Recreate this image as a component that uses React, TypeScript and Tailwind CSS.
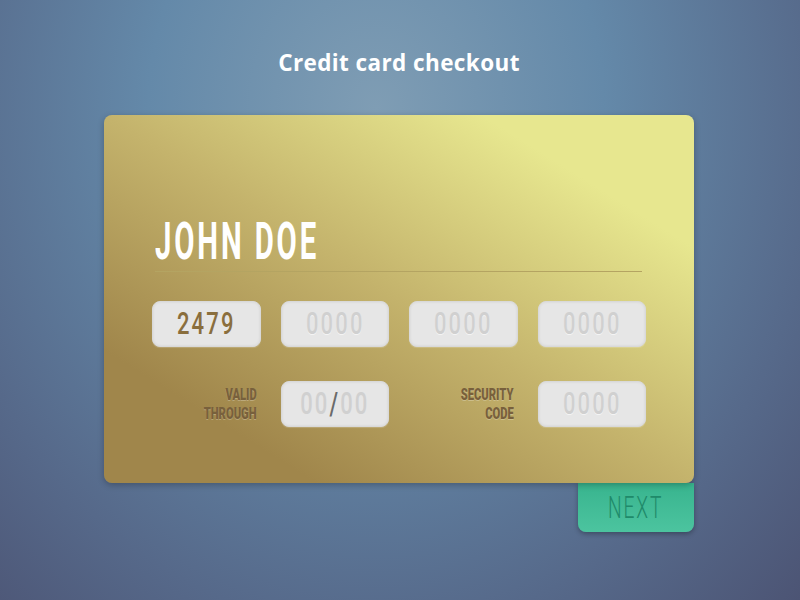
const NUMBER_GROUPS = ["2479", "", "", ""];

// narrow display type: Roboto squeezed horizontally
const NARROW = "font-['Roboto'] inline-block scale-x-[0.71]";
const BOX =
  "h-[46px] rounded-lg bg-[#e6e6e6] border border-[#d9d9d9] shadow-[inset_0_0_3px_rgba(0,0,0,0.08),0_1px_1px_rgba(255,255,255,0.2)] flex items-center justify-center overflow-hidden";

function DigitBox({ value, placeholder }: { value?: string; placeholder: string }) {
  return (
    <div className={BOX}>
      <span
        className={
          value
            ? `${NARROW} font-medium text-[31px] leading-none tracking-[3px] text-[#8a6e3d]`
            : `${NARROW} font-medium text-[31px] leading-none tracking-[3px] text-[#d0d0d0] [text-shadow:0_1px_0_#f4f4f4]`
        }
      >
        {value || placeholder}
      </span>
    </div>
  );
}

function Label({ top, bottom }: { top: string; bottom: string }) {
  return (
    <div className="flex flex-col items-end justify-center pr-1 gap-0">
      {[top, bottom].map((t) => (
        <span
          key={t}
          className="font-['Roboto'] font-black text-[16px] leading-[19px] text-[#78603c] inline-block scale-x-[0.7] origin-right [text-shadow:0_1px_0_rgba(255,255,255,0.25)]"
        >
          {t}
        </span>
      ))}
    </div>
  );
}

export default function App() {
  return (
    <div className="w-full h-[600px] overflow-hidden flex flex-col items-center bg-[radial-gradient(ellipse_at_47%_18%,#7f9db4_0%,#6489a9_38%,#56698a_75%,#4c5474_100%)]">
      <h1 className="mt-[46px] mr-[2px] font-['Open_Sans'] font-bold text-[22.5px] text-white tracking-[0.4px]">
        Credit card checkout
      </h1>

      <div className="mt-[35px] mr-[2px] w-[590px] flex flex-col items-end">
        <div className="relative z-10 w-full h-[368px] rounded-lg shadow-[0_2px_6px_rgba(0,0,0,0.25)] bg-[linear-gradient(to_top_right,#a0864b_18%,#c4b36c_50%,#e7e78f_82%)] px-[48px] pt-[100px]">
          <div className="ml-[3px] mr-[4px] border-b border-[#b4a462] pb-[2px] h-[57px] flex items-end">
            <span className="font-['Roboto'] font-bold text-[51px] leading-[54px] tracking-[5px] text-white inline-block scale-x-[0.575] origin-left whitespace-nowrap">
              JOHN DOE
            </span>
          </div>

          <div className="mt-[29px] grid grid-cols-4 gap-x-5">
            {NUMBER_GROUPS.map((g, i) => (
              <DigitBox key={i} value={g} placeholder="0000" />
            ))}
          </div>

          <div className="mt-[34px] grid grid-cols-4 gap-x-5">
            <Label top="VALID" bottom="THROUGH" />
            <div className={BOX}>
              <span className={`${NARROW} font-medium text-[31px] leading-none tracking-[3px]`}>
                <span className="text-[#d0d0d0]">00</span>
                <span className="text-[#6a6a6a]">/</span>
                <span className="text-[#d0d0d0]">00</span>
              </span>
            </div>
            <Label top="SECURITY" bottom="CODE" />
            <DigitBox placeholder="0000" />
          </div>
        </div>

        <button className="w-[116px] h-[49px] rounded-b-lg bg-[linear-gradient(to_bottom,#38b48e,#4cc49f)] shadow-[0_2px_5px_rgba(0,0,0,0.3)] flex items-center justify-center">
          <span className="font-['Roboto'] font-light text-[31px] leading-none tracking-[3px] text-[#1f8a6a] inline-block scale-x-[0.62]">
            NEXT
          </span>
        </button>
      </div>
    </div>
  );
}
